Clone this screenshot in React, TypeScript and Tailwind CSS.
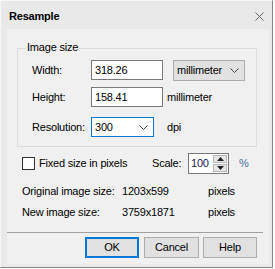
import React from "react";

const Chevron = () => (
  <svg width="9" height="5" viewBox="0 0 9 5" className="shrink-0">
    <path d="M0.5 0.5 L4.5 4.5 L8.5 0.5" fill="none" stroke="#444" strokeWidth="1" />
  </svg>
);

const Btn = ({ label, w, primary }: { label: string; w: string; primary?: boolean }) => (
  <div
    className={`${w} h-[21px] flex items-center justify-center bg-[#e1e1e1] ${
      primary ? "border-2 border-[#0078d7]" : "border border-[#adadad]"
    }`}
  >
    {label}
  </div>
);

export default function App() {
  return (
    <div className="w-[275px] h-[269px] bg-white font-['Liberation_Sans',Arial,sans-serif] text-[11px] tracking-[-0.2px] text-black leading-none">
      <div className="w-[273px] h-[268px] bg-[#e9e9e9] border-l border-t border-l-[#f6f6f6] border-t-[#f6f6f6] border-r border-b border-r-[#848484] border-b-[#848484] flex flex-col">
        {/* title bar */}
        <div className="h-[28px] flex items-center pl-[8px] pr-[6px] pt-[3px] shrink-0">
          <span className="font-bold">Resample</span>
          <svg width="9" height="9" viewBox="0 0 9 9" className="ml-auto mr-[2px]">
            <path d="M0.5 0.5 L8.5 8.5 M8.5 0.5 L0.5 8.5" stroke="#666" strokeWidth="1" />
          </svg>
        </div>

        {/* body */}
        <div className="ml-[6px] w-[262px] h-[235px] bg-[#f0f0f0] flex flex-col shrink-0">
          {/* group box */}
          <div className="relative ml-[10px] mt-[19px] w-[240px] h-[99px] border border-[#dcdcdc] pt-[11px] pl-[14px]">
            <span className="absolute -top-[7px] left-[8px] bg-[#f0f0f0] px-[1px]">Image size</span>

            <div className="flex items-start h-[21px]">
              <span className="w-[59px] h-[20px] flex items-center">Width:</span>
              <div className="w-[72px] h-[20px] bg-white border border-[#7a7a7a] flex items-center pl-[3px]">318.26</div>
              <div className="ml-[10px] w-[72px] h-[21px] bg-[#e1e1e1] border border-[#adadad] flex items-center pl-[3px] pr-[5px]">
                <span>millimeter</span>
                <span className="ml-auto">
                  <Chevron />
                </span>
              </div>
            </div>

            <div className="flex items-center h-[20px] mt-[6px]">
              <span className="w-[59px]">Height:</span>
              <div className="w-[72px] h-[20px] bg-white border border-[#7a7a7a] flex items-center pl-[3px]">158.41</div>
              <span className="ml-[4px]">millimeter</span>
            </div>

            <div className="flex items-center h-[20px] mt-[10px]">
              <span className="w-[59px]">Resolution:</span>
              <div className="w-[63px] h-[20px] bg-white border border-[#0078d7] flex items-center pl-[3px] pr-[5px]">
                <span>300</span>
                <span className="ml-auto">
                  <Chevron />
                </span>
              </div>
              <span className="ml-[13px]">dpi</span>
            </div>
          </div>

          {/* fixed size / scale */}
          <div className="flex items-center h-[21px] mt-[6px] pl-[15px]">
            <div className="w-[130px] flex items-center">
              <div className="w-[13px] h-[13px] bg-white border border-[#333]" />
              <span className="ml-[4px]">Fixed size in pixels</span>
            </div>
            <span className="w-[36px]">Scale:</span>
            <div className="w-[41px] h-[21px] bg-white border border-[#7a7a7a] flex items-center pl-[2px] pr-[1px]">
              <span className="text-[#1a1a5a]">100</span>
              <div className="ml-auto flex flex-col gap-[1px]">
                <div className="w-[14px] h-[8px] bg-[#e6e6e6] border border-[#b8b8b8] flex items-center justify-center">
                  <svg width="7" height="4" viewBox="0 0 7 4">
                    <path d="M0 4 L3.5 0 L7 4 Z" fill="#222" />
                  </svg>
                </div>
                <div className="w-[14px] h-[8px] bg-[#e6e6e6] border border-[#b8b8b8] flex items-center justify-center">
                  <svg width="7" height="4" viewBox="0 0 7 4">
                    <path d="M0 0 L3.5 4 L7 0 Z" fill="#222" />
                  </svg>
                </div>
              </div>
            </div>
            <span className="ml-[10px] text-[#4a6da3]">%</span>
          </div>

          {/* info */}
          <div className="flex items-center h-[14px] mt-[10px] pl-[15px]">
            <span className="w-[100px]">Original image size:</span>
            <span className="w-[86px]">1203x599</span>
            <span>pixels</span>
          </div>
          <div className="flex items-center h-[14px] mt-[7px] pl-[15px]">
            <span className="w-[100px]">New image size:</span>
            <span className="w-[86px]">3759x1871</span>
            <span>pixels</span>
          </div>

          <div className="mt-[13px] w-[256px] h-px bg-[#a0a0a0]" />

          {/* buttons */}
          <div className="flex mt-[4px] ml-[78px]">
            <Btn label="OK" w="w-[54px]" primary />
            <div className="ml-[5px]">
              <Btn label="Cancel" w="w-[55px]" />
            </div>
            <div className="ml-[4px]">
              <Btn label="Help" w="w-[54px]" />
            </div>
          </div>
        </div>
      </div>
    </div>
  );
}
